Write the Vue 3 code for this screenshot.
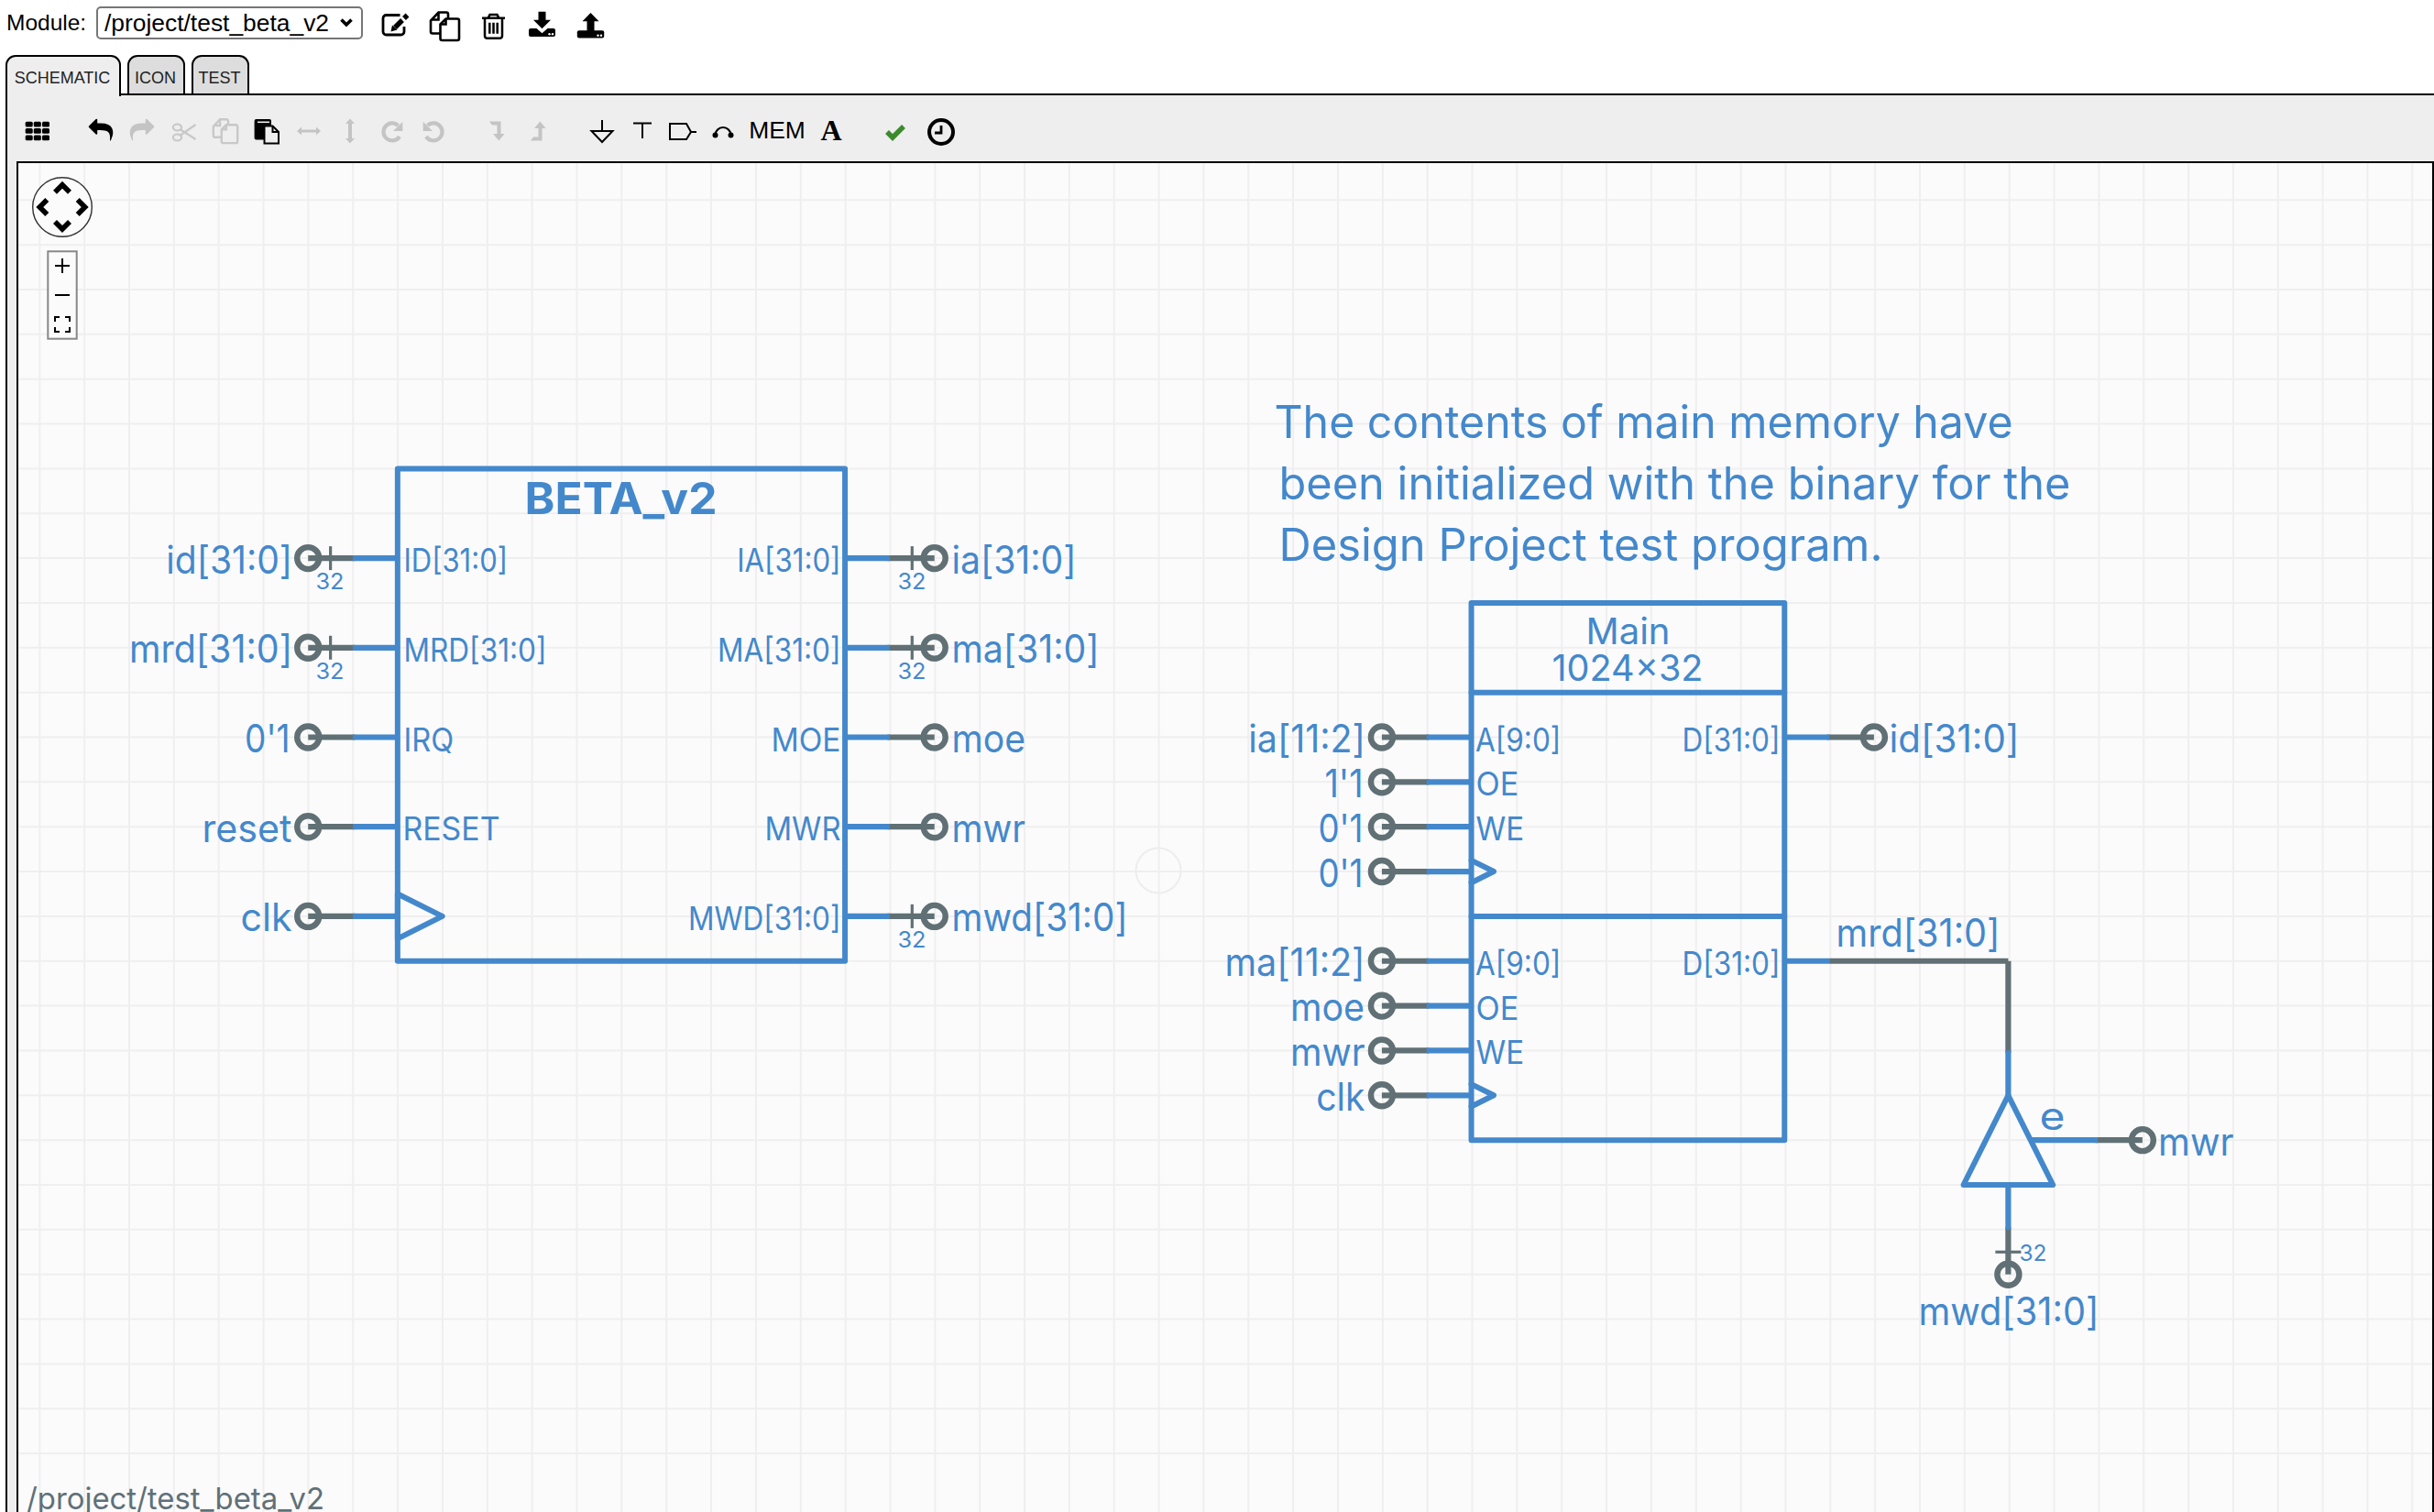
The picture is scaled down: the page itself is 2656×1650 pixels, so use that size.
<script setup>
const PX = 48.82
const PY = 48.85
const gx = (i) => 43.3 + PX * i
const gy = (j) => 218.3 + PY * j

const gridV = Array.from({ length: 54 }, (_, i) => 43.3 + 48.85 * i)
const gridH = Array.from({ length: 29 }, (_, j) => gy(j))

const BLUE = '#4488cc'
const GRAY = '#607075'

const wires = []
const rings = []
const ticks = []
const texts = []

const wire = (a, b, c, d, color) => wires.push({ x1: gx(a), y1: gy(b), x2: gx(c), y2: gy(d), color })
const label = (s, x1, x2, base, size) => texts.push({ s, x1: x1 - 1.5, x2: x2 + 1.5, base, size })

// BETA block pins
for (const j of [8, 10, 12, 14, 16]) {
  wire(6, j, 7.05, j, GRAY)
  wire(7, j, 8, j, BLUE)
  rings.push({ x: gx(6), y: gy(j) })
}
for (const j of [8, 10, 12, 14, 16]) {
  wire(20, j, 18.95, j, GRAY)
  wire(19, j, 18, j, BLUE)
  rings.push({ x: gx(20), y: gy(j) })
}
for (const j of [8, 10]) ticks.push({ x1: gx(6.5), y1: gy(j) - 13, x2: gx(6.5), y2: gy(j) + 13 })
for (const j of [8, 10, 16]) ticks.push({ x1: gx(19.5), y1: gy(j) - 13, x2: gx(19.5), y2: gy(j) + 13 })

// Memory pins
for (const j of [12, 13, 14, 15, 17, 18, 19, 20]) {
  wire(30, j, 31.05, j, GRAY)
  wire(31, j, 32, j, BLUE)
  rings.push({ x: gx(30), y: gy(j) })
}
wire(41, 12, 39.95, 12, GRAY)
wire(40, 12, 39, 12, BLUE)
rings.push({ x: gx(41), y: gy(12) })

wire(40, 17, 44, 17, GRAY)
wire(39, 17, 40, 17, BLUE)
wire(44, 17, 44, 19.05, GRAY)
wire(44, 19, 44, 20, BLUE)

// Tristate driver
wire(47, 21, 45.95, 21, GRAY)
wire(46, 21, 44.5, 21, BLUE)
rings.push({ x: gx(47), y: gy(21) })
wire(44, 24, 44, 22.95, GRAY)
wire(44, 23, 44, 22, BLUE)
rings.push({ x: gx(44), y: gy(24) })
ticks.push({ x1: gx(44) - 14, y1: gy(23.5), x2: gx(44) + 14, y2: gy(23.5) })

const triPoints = `${gx(44)},${gy(20)} ${gx(45)},${gy(22)} ${gx(43)},${gy(22)}`
const clkA = `${gx(8)},${gy(15.5)} ${gx(9)},${gy(16)} ${gx(8)},${gy(16.5)}`
const clkB = `${gx(32)},${gy(14.75)} ${gx(32.5)},${gy(15)} ${gx(32)},${gy(15.25)}`
const clkC = `${gx(32)},${gy(19.75)} ${gx(32.5)},${gy(20)} ${gx(32)},${gy(20.25)}`

const blockLines = [
  [32, 11, 39, 11],
  [32, 16, 39, 16]
].map(([a, b, c, d]) => ({ x1: gx(a), y1: gy(b), x2: gx(c), y2: gy(d) }))

// Labels
const big = 42
const mid = 35
label('id[31:0]', 182.8, 317.5, gy(8) + 16.5, big)
label('mrd[31:0]', 142.5, 317.5, gy(10) + 16.5, big)
label("0'1", 268.6, 315, gy(12) + 16.5, big)
label('reset', 222, 317, gy(14) + 16.5, big)
label('clk', 264, 317, gy(16) + 16.5, big)
label('ID[31:0]', 442, 552.5, gy(8) + 15, mid)
label('MRD[31:0]', 442, 595, gy(10) + 15, mid)
label('IRQ', 442, 493.6, gy(12) + 15, mid)
label('RESET', 441, 544, gy(14) + 15, mid)
label('IA[31:0]', 805.7, 916, gy(8) + 15, mid)
label('MA[31:0]', 784.6, 916, gy(10) + 15, mid)
label('MOE', 843, 916, gy(12) + 15, mid)
label('MWR', 836, 916, gy(14) + 15, mid)
label('MWD[31:0]', 752.5, 916, gy(16) + 15, mid)
label('ia[31:0]', 1040, 1173, gy(8) + 16.5, big)
label('ma[31:0]', 1040, 1198, gy(10) + 16.5, big)
label('moe', 1040, 1117.5, gy(12) + 16.5, big)
label('mwr', 1040, 1117.5, gy(14) + 16.5, big)
label('mwd[31:0]', 1040, 1229, gy(16) + 16.5, big)
for (const j of [8, 10]) label('32', 346, 374, gy(j) + 34, 24)
for (const j of [8, 10, 16]) label('32', 981, 1009, gy(j) + 34, 24)
label('BETA_v2', 574, 781, 561, 48)
label('Main', 1732, 1821, 702.7, 40)
label('1024×32', 1695, 1857, 743, 40)
label('ia[11:2]', 1363.8, 1488.4, gy(12) + 16.5, big)
label("1'1", 1447, 1486, gy(13) + 16.5, big)
label("0'1", 1440, 1486, gy(14) + 16.5, big)
label("0'1", 1440, 1486, gy(15) + 16.5, big)
label('ma[11:2]', 1338, 1488, gy(17) + 16.5, big)
label('moe', 1409.4, 1487.5, gy(18) + 16.5, big)
label('mwr', 1409.4, 1488, gy(19) + 16.5, big)
label('clk', 1437.7, 1488, gy(20) + 16.5, big)
for (const j of [12, 17]) {
  label('A[9:0]', 1611.6, 1701.8, gy(j) + 15, mid)
  label('D[31:0]', 1837, 1941, gy(j) + 15, mid)
}
for (const j of [13, 18]) label('OE', 1612, 1655.8, gy(j) + 15, mid)
for (const j of [14, 19]) label('WE', 1612, 1661.6, gy(j) + 15, mid)
label('id[31:0]', 2063, 2202, gy(12) + 16.5, big)
label('mrd[31:0]', 2005, 2181, 1032.7, big)
label('e', 2227, 2252, 1233, big)
label('mwr', 2356.6, 2436, 1260.5, big)
label('32', 2205, 2232, 1376, 24)
label('mwd[31:0]', 2095, 2289, 1446, big)
label('The contents of main memory have', 1392, 2195, 477.5, 49)
label('been initialized with the binary for the', 1397, 2258, 544.5, 49)
label('Design Project test program.', 1397, 2053, 611.5, 49)

const replyPath = 'M1792 1120q0 166-127 451-3 7-10.5 24t-13.5 30-13 22q-12 17-28 17-15 0-23.5-10t-8.5-25q0-9 2.5-26.5t2.5-23.5q5-68 5-123 0-101-17.5-181t-48.5-138.5-80-101-105.5-69.5-133-42.5-154-21.5-175.5-6h-224v256q0 26-19 45t-45 19-45-19l-512-512q-19-19-19-45t19-45l512-512q19-19 45-19t45 19 19 45v256h224q713 0 875 403 53 134 53 333z'
const thCells = []
for (const x of [-13.3, -4.2, 5]) for (const y of [-10.3, -3, 4.4]) thCells.push({ x, y })
</script>

<template>
  <div class="page">
    <div class="module-row">
      <label class="module-label">Module:</label>
      <div class="select-wrap">
        <select class="module-select">
          <option>/project/test_beta_v2</option>
        </select>
        <svg class="select-arrow" viewBox="0 0 14 10" width="14" height="10">
          <path d="M1.5 1.5 L7 7 L12.5 1.5" fill="none" stroke="#000" stroke-width="3.6" />
        </svg>
      </div>
      <div class="file-tools">
        <svg class="file-icon" viewBox="-26.5 -25 53 50">
          <g transform="translate(0,2)">
            <path d="M4,-10.5 H-11 a3.5 3.5 0 0 0 -3.5 3.5 V7.5 a3.5 3.5 0 0 0 3.5 3.5 H5 a3.5 3.5 0 0 0 3.5-3.5 V2" fill="none" stroke="#000" stroke-width="2.8" />
            <path d="M-1.5,3 L6.5,-5 M8.5,-7 L12,-10.5" fill="none" stroke="#000" stroke-width="5.5" />
            <path d="M-6,7.5 L-4.5,0.5 L1,5.5 Z" fill="#000" />
          </g>
        </svg>
        <svg class="file-icon" viewBox="-26.5 -25 53 50">
          <g transform="translate(0,3.5)" fill="none" stroke="#000" stroke-width="2.6">
            <path d="M-5,8 H-13.5 a2,2 0 0 1 -2,-2 V-6 L-7,-15 H1.5 a2 2 0 0 1 2 2 V-8 M-7,-15 V-7 H-15.5" />
            <path d="M-5,-2 L1,-8 H13.5 a2 2 0 0 1 2 2 V13.5 a2 2 0 0 1-2 2 H-3 a2 2 0 0 1-2-2 Z M1,-8 V-2 H-5" />
          </g>
        </svg>
        <svg class="file-icon" viewBox="-26.5 -25 53 50">
          <g transform="translate(0,3.8)" fill="none" stroke="#000" stroke-width="2.5">
            <path d="M-12.5,-9 H12.5 M-9.5,-9 V10.5 a2.5 2.5 0 0 0 2.5 2.5 H7 a2.5 2.5 0 0 0 2.5-2.5 V-9 M-6,-9 L-4,-12.7 H4 L6,-9" />
            <path d="M-4.2,-4 V8 M0,-4 V8 M4.2,-4 V8" />
          </g>
        </svg>
        <svg class="file-icon" viewBox="-26.5 -25 53 50">
          <g transform="translate(0,1.3)">
            <path d="M-4,-13.6 H4 V-4.5 H9.5 L0,5 L-9.5,-4.5 H-4 Z" fill="#000" />
            <path d="M-12.5,4.7 H-6 L0,10 L6,4.7 H12.5 a2,2 0 0 1 2,2 V11.7 a2,2 0 0 1 -2,2 H-12.5 a2 2 0 0 1 -2-2 V6.7 a2 2 0 0 1 2-2 Z" fill="#000" />
            <circle cx="8" cy="11" r="1.2" fill="#fff" />
            <circle cx="11.5" cy="11" r="1.2" fill="#fff" />
          </g>
        </svg>
        <svg class="file-icon" viewBox="-26.5 -25 53 50">
          <g transform="translate(0,2.8)">
            <path d="M0,-13.8 L9,-4.5 H4 V7 H-4 V-4.5 H-9 Z" fill="#000" />
            <path d="M-12.7,5.5 H12.7 a2,2 0 0 1 2,2 V11.8 a2,2 0 0 1 -2,2 H-12.7 a2 2 0 0 1 -2-2 V7.5 a2 2 0 0 1 2-2 Z" fill="#000" />
            <circle cx="8" cy="11" r="1.2" fill="#fff" />
            <circle cx="11.5" cy="11" r="1.2" fill="#fff" />
          </g>
        </svg>
      </div>
    </div>

    <div class="tabs">
      <div class="tab active">SCHEMATIC</div>
      <div class="tab second">ICON</div>
      <div class="tab third">TEST</div>
    </div>

    <div class="editor">
      <div class="toolbar">
        <button class="tool w46"><svg viewBox="-23 -18 46 36"><rect v-for="(c, n) in thCells" :key="n" :x="c.x" :y="c.y" width="8" height="5.8" rx="1.5" fill="#000" /></svg></button>
        <div class="gap s1"></div>
        <button class="tool w46"><svg viewBox="-23 -18 46 36"><path :d="replyPath" fill="#000" transform="scale(.0148) translate(-896,-960)" /></svg></button>
        <button class="tool w46"><svg viewBox="-23 -18 46 36"><path :d="replyPath" fill="#c4c4c4" transform="scale(-.0148,.0148) translate(-896,-960)" /></svg></button>
        <button class="tool w46"><svg viewBox="-23 -18 46 36"><g fill="none" stroke="#c8c8c8" stroke-width="2.2"><ellipse cx="-7.5" cy="-4" rx="4.6" ry="3.5" /><ellipse cx="-7.5" cy="7" rx="4.6" ry="3.5" /><path d="M-4,-1.5 L12.5,9 M-4,4.5 L12.5,-7" /></g></svg></button>
        <button class="tool w46"><svg viewBox="-23 -18 46 36"><g transform="scale(.85)" fill="none" stroke="#c8c8c8" stroke-width="2.8"><path d="M-5,8 H-13.5 a2,2 0 0 1 -2,-2 V-6 L-7,-15 H1.5 a2 2 0 0 1 2 2 V-8 M-7,-15 V-7 H-15.5" /><path d="M-5,-2 L1,-8 H13.5 a2 2 0 0 1 2 2 V13.5 a2 2 0 0 1-2 2 H-3 a2 2 0 0 1-2-2 Z M1,-8 V-2 H-5" /></g></svg></button>
        <button class="tool w46"><svg viewBox="-23 -18 46 36"><rect x="-13.4" y="-13" width="18.4" height="22.5" rx="2" fill="#000" /><rect x="-10" y="-10.5" width="13" height="1.6" fill="#eee" /><path d="M-2.5,-5.5 H6.5 L13,1 V13.5 H-2.5 Z" fill="#eee" stroke="#000" stroke-width="2" /><path d="M6.5,-5.5 V1 H13" fill="none" stroke="#000" stroke-width="2" /></svg></button>
        <button class="tool w46"><svg viewBox="-23 -18 46 36"><path d="M-13,0 L-8,-4.5 V-1.5 H8 V-4.5 L13,0 L8,4.5 V1.5 H-8 V4.5 Z" fill="#c4c4c4" /></svg></button>
        <button class="tool w46"><svg viewBox="-23 -18 46 36"><path d="M0,-13.5 L5,-8 H2 V8 H5 L0,13.5 L-5,8 H-2 V-8 H-5 Z" fill="#c4c4c4" /></svg></button>
        <button class="tool w46"><svg viewBox="-23 -18 46 36"><g transform="translate(0,1)"><path d="M6.5,-7 A9.5,9.5 0 1 0 8,5" fill="none" stroke="#c4c4c4" stroke-width="4.2" /><path d="M11.3,-11 V-1 H1 Z" fill="#c4c4c4" /></g></svg></button>
        <button class="tool w46"><svg viewBox="-23 -18 46 36"><g transform="translate(0,1) scale(-1,1)"><path d="M6.5,-7 A9.5,9.5 0 1 0 8,5" fill="none" stroke="#c4c4c4" stroke-width="4.2" /><path d="M11.3,-11 V-1 H1 Z" fill="#c4c4c4" /></g></svg></button>
        <div class="gap s2"></div>
        <button class="tool w46"><svg viewBox="-23 -18 46 36"><path d="M-8,-10.5 H4.5 V3 H8.5 L2.3,10.5 L-3.9,3 H0.5 V-6.5 H-5 Z" fill="#c4c4c4" /></svg></button>
        <button class="tool w46"><svg viewBox="-23 -18 46 36"><path d="M-8,10.5 H4.5 V-3 H8.5 L2.3,-10.5 L-3.9,-3 H0.5 V6.5 H-5 Z" fill="#c4c4c4" /></svg></button>
        <div class="gap s3"></div>
        <button class="tool w44"><svg viewBox="-23 -18 46 36"><path d="M0,-12 V0 M-11.5,0 H11.5 L0,12 Z" fill="none" stroke="#000" stroke-width="2" /></svg></button>
        <button class="tool w44"><svg viewBox="-23 -18 46 36"><path d="M-10,-8.5 H10 M0,-8.5 V8" fill="none" stroke="#000" stroke-width="2" /></svg></button>
        <button class="tool w44"><svg viewBox="-23 -18 46 36"><path d="M-14,-8 H4 L9,1 L4,9 H-14 Z M9,1 H15" fill="none" stroke="#000" stroke-width="2" /></svg></button>
        <button class="tool w44"><svg viewBox="-23 -18 46 36"><path d="M-8.5,4.5 A8.5,8.5 0 0 1 8.5,4.5" fill="none" stroke="#000" stroke-width="2.2" /><circle cx="-8.5" cy="4.5" r="3" fill="#000" /><circle cx="8.5" cy="4.5" r="3" fill="#000" /></svg></button>
        <button class="tool mem">MEM</button>
        <button class="tool serif-a">A</button>
        <div class="gap s4"></div>
        <button class="tool w46"><svg viewBox="-23 -18 46 36"><path d="M-9,1 L-3,7 L9,-5" fill="none" stroke="#3c8a2e" stroke-width="5.5" /></svg></button>
        <button class="tool w50"><svg viewBox="-25 -18 50 36"><circle cx="0" cy="1" r="13" fill="none" stroke="#000" stroke-width="4" /><path d="M0,-6 V2 H-7" fill="none" stroke="#000" stroke-width="2.8" /></svg></button>
      </div>

      <div class="canvas">
        <svg class="sheet" viewBox="20 178 2634 1472">
          <rect x="20" y="178" width="2634" height="1472" fill="#fbfbfb" />
          <line v-for="x in gridV" :key="'v' + x" :x1="x" :x2="x" y1="178" y2="1650" class="grid" />
          <line v-for="y in gridH" :key="'h' + y" :y1="y" :y2="y" x1="20" x2="2654" class="grid" />

          <circle cx="1264" cy="950" r="24.5" class="ghost" />

          <!-- wires -->
          <line v-for="(w, n) in wires" :key="'w' + n" :x1="w.x1" :y1="w.y1" :x2="w.x2" :y2="w.y2" :stroke="w.color" class="wire" />
          <line v-for="(t, n) in ticks" :key="'t' + n" :x1="t.x1" :y1="t.y1" :x2="t.x2" :y2="t.y2" class="tick" />
          <circle v-for="(r, n) in rings" :key="'r' + n" :cx="r.x" :cy="r.y" r="12" class="ring" />

          <!-- blocks -->
          <rect :x="gx(8)" :y="gy(6)" :width="PX * 10" :height="PY * 11" class="shape" />
          <polygon :points="clkA" class="shape" />
          <rect :x="gx(32)" :y="gy(9)" :width="PX * 7" :height="PY * 12" class="shape" />
          <line v-for="(l, n) in blockLines" :key="'b' + n" :x1="l.x1" :y1="l.y1" :x2="l.x2" :y2="l.y2" class="shape" />
          <polyline :points="clkB" class="shape" />
          <polyline :points="clkC" class="shape" />
          <polygon :points="triPoints" class="shape" />

          <!-- labels -->
          <text
            v-for="(t, n) in texts"
            :key="'x' + n"
            :x="t.x1"
            :y="t.base"
            :font-size="t.size"
            :textLength="t.x2 - t.x1"
            lengthAdjust="spacingAndGlyphs"
            :class="['dtext', { bold: t.s === 'BETA_v2' }]"
          >{{ t.s }}</text>
          <text x="29" y="1647" font-size="33" textLength="325" lengthAdjust="spacingAndGlyphs" class="dtext path">/project/test_beta_v2</text>

          <!-- view controls -->
          <circle cx="68" cy="226" r="32.3" class="nav" />
          <path d="M60,209.7 L68,201.7 L76,209.7 M60,242 L68,250 L76,242 M51.3,218 L43.3,226 L51.3,234 M84.7,218 L92.7,226 L84.7,234" class="chev" />
          <rect x="52.3" y="274.3" width="31.4" height="95.4" class="zoombox" />
          <path d="M60,290 H76 M68,282 V298 M60,322 H76 M60,351 V346 H65 M71,346 H76 V351 M76,357 V362 H71 M65,362 H60 V357" class="zoomglyph" />
        </svg>
      </div>
    </div>
  </div>
</template>

<style>
html, body { margin: 0; background: #fff; overflow: hidden; }
</style>

<style scoped>
.page {
  width: 2656px;
  height: 1650px;
  overflow: hidden;
  display: flex;
  flex-direction: column;
  font-family: "Liberation Sans", Arial, sans-serif;
  color: #000;
  background: #fff;
}
.module-row {
  height: 50px;
  margin-bottom: 10px;
  display: flex;
  align-items: center;
  padding-left: 7px;
  flex: none;
}
.module-label {
  font-size: 24.5px;
  width: 98px;
}
.select-wrap {
  position: relative;
  width: 291px;
  height: 36px;
}
.module-select {
  width: 100%;
  height: 100%;
  box-sizing: border-box;
  appearance: none;
  border: 2px solid #767676;
  border-radius: 5px;
  background: #fff;
  padding: 0 0 0 7px;
  font: 26.4px "Liberation Sans", Arial, sans-serif;
  color: #000;
}
.select-arrow {
  position: absolute;
  right: 11px;
  top: 13px;
}
.file-tools {
  display: flex;
  margin-left: 10px;
}
.file-icon {
  width: 53px;
  height: 50px;
  display: block;
}
.tabs {
  display: flex;
  flex: none;
  height: 42px;
  padding-left: 6px;
  position: relative;
  z-index: 1;
}
.tab {
  box-sizing: border-box;
  height: 42px;
  border: 2px solid #000;
  border-bottom: none;
  border-radius: 11px 11px 0 0;
  background: #ddd;
  font-size: 18px;
  line-height: 18px;
  padding-top: 14px;
  padding-right: 2px;
  text-align: center;
  color: #222;
}
.tab.active {
  width: 126px;
  height: 45px;
  background: #eee;
}
.tab.second {
  width: 63px;
  margin-left: 7px;
}
.tab.third {
  width: 63px;
  margin-left: 7px;
}
.editor {
  flex: 1;
  margin-left: 6px;
  border-left: 2px solid #000;
  border-top: 2px solid #000;
  background: #eee;
  display: flex;
  flex-direction: column;
  min-height: 0;
}
.toolbar {
  flex: none;
  height: 72px;
  box-sizing: border-box;
  padding: 5px 0 0 10.2px;
  display: flex;
  align-items: center;
}
.tool {
  flex: none;
  border: none;
  background: none;
  padding: 0;
  margin: 0;
  height: 36px;
  display: flex;
  align-items: center;
  justify-content: center;
  color: #000;
}
.tool svg {
  width: 46px;
  height: 36px;
  flex: none;
  display: block;
}
.tool.w46 { width: 45.4px; }
.tool.w44 { width: 44px; }
.tool.w50 { width: 50px; margin-left: 2.5px; }
.tool.w50 svg { width: 50px; }
.gap { flex: none; }
.gap.s1 { width: 23.6px; }
.gap.s2 { width: 23.7px; }
.gap.s3 { width: 24.8px; }
.gap.s4 { width: 24.9px; }
.tool.mem {
  width: 60px;
  margin-left: 7px;
  font: 26.4px "Liberation Sans", Arial, sans-serif;
  white-space: nowrap;
}
.tool.serif-a {
  width: 44px;
  margin-left: 7px;
  font: bold 32px "Liberation Serif", "Times New Roman", serif;
}
.canvas {
  flex: 1;
  margin-left: 10px;
  border: 2px solid #000;
  border-bottom: none;
  min-height: 0;
  overflow: hidden;
}
.sheet {
  display: block;
  width: 2634px;
  height: 1472px;
}
.grid { stroke: #efefef; stroke-width: 2; }
.ghost { fill: none; stroke: #ededed; stroke-width: 2; }
.wire { stroke-width: 6.2; stroke-linecap: butt; }
.tick { stroke: #607075; stroke-width: 3.2; }
.ring { fill: none; stroke: #607075; stroke-width: 6.4; }
.shape { fill: none; stroke: #4488cc; stroke-width: 6; stroke-linejoin: round; stroke-linecap: round; }
.dtext {
  font-family: Inter, "Liberation Sans", sans-serif;
  fill: #4488cc;
}
.dtext.bold { font-weight: 700; }
.dtext.path { fill: #607078; }
.nav { fill: #fbfbfb; stroke: #333; stroke-width: 1.4; }
.chev { fill: none; stroke: #000; stroke-width: 5.6; }
.zoombox { fill: #fbfbfb; stroke: #888; stroke-width: 2; }
.zoomglyph { fill: none; stroke: #000; stroke-width: 2; }
</style>
